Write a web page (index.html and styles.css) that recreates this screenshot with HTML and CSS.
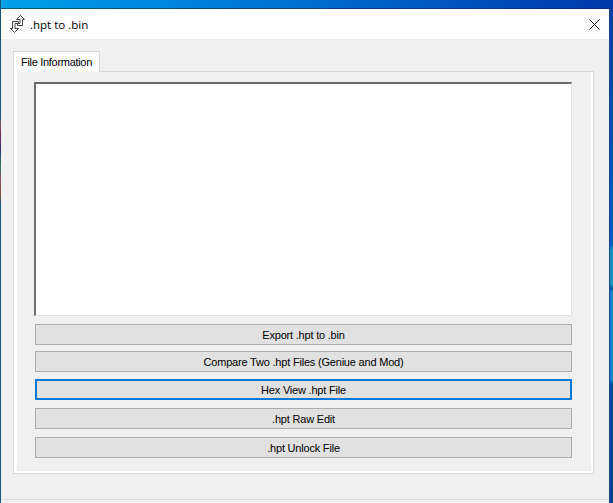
FILE: index.html
```html
<!DOCTYPE html>
<html>
  <head>
    <title>.hpt to .bin</title>
    <meta charset="utf-8" />
    <link rel="stylesheet" href="styles.css">
  </head>
  <body>
    <div class="window">
      <div class="titlebar">
        <svg class="app-icon" width="16" height="18" viewBox="0 0 16 18">
          <path d="M10.5 .5L14.5 4.5H12.5V10.5H7.5V8.5H10V4.5H6.5Z" fill="#fff" stroke="#444" />
          <path d="M4.5 17.5L.5 13.5H2.5V6.5H8.5V8.5H5V13.5H8.5Z" fill="#fff" stroke="#444" />
        </svg>
        <span class="title">.hpt to .bin</span>
        <svg class="close" width="11" height="11" viewBox="0 0 11 11">
          <path d="M.5 .5L10.5 10.5M10.5 .5L.5 10.5" stroke="#111" fill="none" />
        </svg>
      </div>

      <div class="content">
        <div class="tabs">
          <div class="tab">File Information</div>
        </div>

        <div class="tab-panel">
          <div class="output"></div>

          <div class="actions">
            <button class="btn">Export .hpt to .bin</button>
            <button class="btn">Compare Two .hpt Files (Geniue and Mod)</button>
            <button class="btn btn-focus">Hex View .hpt File</button>
            <button class="btn">.hpt Raw Edit</button>
            <button class="btn">.hpt Unlock File</button>
          </div>
        </div>
      </div>
    </div>
  </body>
</html>
```

FILE: styles.css
```css
* {
  box-sizing: border-box;
}

html,
body {
  height: 100%;
}

body {
  margin: 0;
  padding: 9px 4px 0 1px;
  overflow: hidden;
  background:
    linear-gradient(to bottom, #135a78 0, #135a78 118px, #7a5a60 122px, #6a2a50 135px, #30307a 150px, #2a7a50 165px, #8a5060 180px, #7a5040 195px, #135a78 205px) left top / 1px 100% no-repeat,
    linear-gradient(to right, #0d5a7c 0, #0a2f80 100%) 0 8px / 100% 1px no-repeat,
    linear-gradient(to right, #00a0e8 0, #0078d8 40%, #0038a8 100%) top / 100% 8px no-repeat,
    linear-gradient(to bottom, #0a3c9e 0, #0a5acb 245px, #1a90c0 250px, #1a90c0 285px, #0a50a0 288px, #1a80c8 292px, #1a80c8 380px, #0a4a9c 385px, #0a3f90 100%);
  font-family: "Liberation Sans", sans-serif;
  font-size: 11px;
  color: #000;
}

.window {
  display: flex;
  flex-direction: column;
  height: 494px;
  background: #f0f0f0;
  box-shadow: 1px 0 #0c4a8a;
}

.titlebar {
  display: flex;
  align-items: center;
  flex: none;
  height: 30px;
  padding: 0 9px;
  background: #fff;
}

.app-icon {
  flex: none;
  margin-right: 4px;
}

.title {
  flex: 1;
  font-family: "Open Sans", sans-serif;
  font-size: 11.5px;
  color: #000;
}

.content {
  flex: 1;
  padding: 12px 15px 0 12px;
  border-bottom: 1px solid #d9d9d9;
  margin-bottom: 3px;
}

.tabs {
  display: flex;
  height: 20px;
  position: relative;
  z-index: 1;
}

.tab {
  display: flex;
  align-items: center;
  width: 87px;
  height: 21px;
  padding: 0 7px;
  background: #fff;
  border: 1px solid #d9d9d9;
  border-bottom: 0;
  letter-spacing: -0.3px;
}

.tab-panel {
  height: 403px;
  padding: 10px 21px 0 20px;
  background: #f0f0f0;
  border: 1px solid #d9d9d9;
  box-shadow: inset 3px 0 #fff, inset -2px -2px #fff;
}

.output {
  height: 234px;
  background: #fff;
  border-style: solid;
  border-width: 2px 1px 1px 2px;
  border-color: #696969 #e3e3e3 #e3e3e3 #707070;
}

.actions {
  display: flex;
  flex-direction: column;
  padding: 8px 0 0 1px;
}

.btn {
  flex: none;
  height: 21px;
  padding: 0;
  margin-bottom: 6px;
  background: #e1e1e1;
  border: 1px solid #adadad;
  font-family: "Liberation Sans", sans-serif;
  font-size: 11px;
  letter-spacing: -0.2px;
  color: #000;
}

.btn-focus {
  margin: 1px 0 8px;
  border: 2px solid #0078d7;
}

.btn-focus + .btn {
  margin-bottom: 8px;
}
```
